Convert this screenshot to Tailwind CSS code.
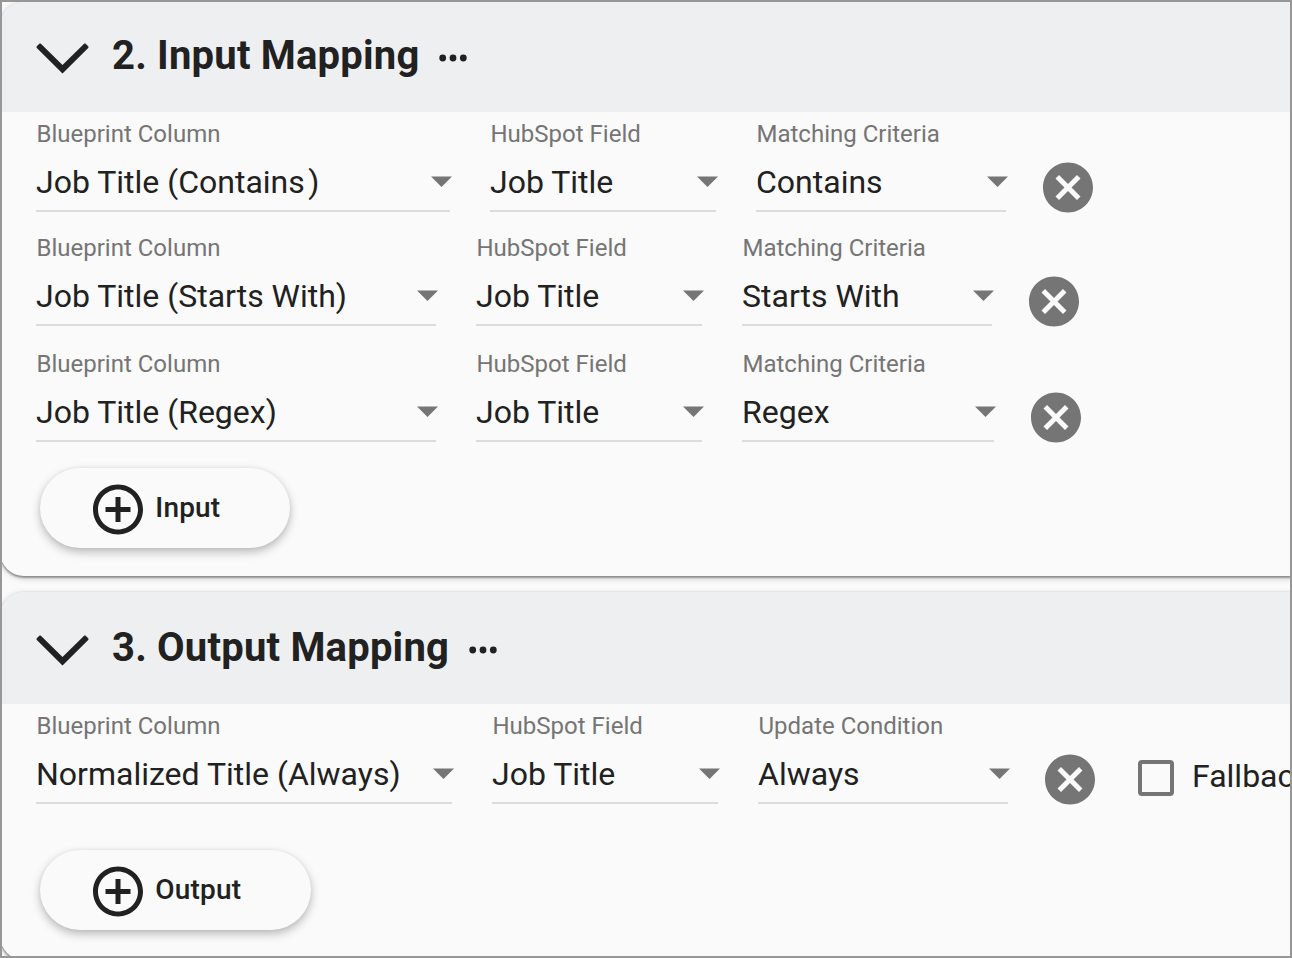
<!DOCTYPE html>
<html lang="en">
  <head>
    <meta charset="UTF-8" />
    <title>Blueprint Mapping</title>
    <script src="https://cdn.jsdelivr.net/npm/@tailwindcss/browser@4"></script>
  </head>
  <body class="w-[1292px] h-[958px] overflow-hidden border-2 border-[#979797] bg-[#fafafa] text-[#212121] font-[Roboto,sans-serif] text-[32px]">

    <!-- shared icons -->
    <svg class="hidden">
      <symbol id="chevron" viewBox="0 0 54 32">
        <path d="M4.9 1.8 26.5 23 48.1 1.8c.5-.5 1.1-.5 1.6 0l2.5 2.5c.5.5.5 1.1 0 1.6L26.5 31.5.8 5.9C.3 5.4.3 4.8.8 4.3l2.5-2.5c.5-.5 1.1-.5 1.6 0z" fill="currentColor" />
      </symbol>
      <symbol id="dots" viewBox="0 0 28 8">
        <circle cx="3.7" cy="4" r="3.4" /><circle cx="14" cy="4" r="3.4" /><circle cx="24.3" cy="4" r="3.4" />
      </symbol>
      <symbol id="caret" viewBox="0 0 21 12">
        <path d="M0 .5h21L10.5 11z" />
      </symbol>
      <symbol id="cancel" viewBox="1.6 1.4 20.8 20.8">
        <path d="M12 2C6.47 2 2 6.47 2 12s4.47 10 10 10 10-4.47 10-10S17.53 2 12 2zm5 13.59L15.59 17 12 13.41 8.41 17 7 15.59 10.59 12 7 8.41 8.41 7 12 10.59 15.59 7 17 8.41 13.41 12 17 15.59z" />
      </symbol>
      <symbol id="add" viewBox="1.6 1.4 20.8 20.8">
        <path d="M13 7h-2v4H7v2h4v4h2v-4h4v-2h-4V7zm-1-5C6.48 2 2 6.48 2 12s4.48 10 10 10 10-4.48 10-10S17.52 2 12 2zm0 18c-4.41 0-8-3.59-8-8s3.59-8 8-8 8 3.59 8 8-3.59 8-8 8z" />
      </symbol>
    </svg>

    <section class="w-[1294px] h-[574px] -ml-0.5 rounded-l-[24px] overflow-hidden bg-[#fafafa] shadow-[0_2px_2px_rgba(0,0,0,0.32),0_2px_6px_rgba(0,0,0,0.2),0_0_2px_rgba(0,0,0,0.12)]">
      <header class="flex items-center h-[110px] pl-9 pb-0.5 bg-[#eeeff1]">
        <svg class="w-[54px] h-8 mt-[3px] shrink-0"><use href="#chevron" /></svg>
        <h2 class="ml-[22px] text-[40px] leading-[48px] font-bold tracking-[0.2px]">2. Input Mapping</h2>
        <svg class="w-7 h-2 mt-[3px] ml-5 fill-current"><use href="#dots" /></svg>
      </header>

      <div class="flex items-end h-[100px] pl-9 whitespace-nowrap">
        <div class="w-[414px] border-b-2 border-[#dcdcdc] pb-[9px]">
          <label class="block pl-[0.5px] text-[24px] leading-7 text-[#757575]">Blueprint Column</label>
          <div class="flex items-center justify-between pt-[15px] leading-[38px]">
            <span>Job Title (Contains<span class="ml-[3.5px]">)</span></span>
            <svg class="w-[21px] h-3 -mr-0.5 fill-[#757575]"><use href="#caret" /></svg>
          </div>
        </div>
        <div class="w-[226px] ml-10 border-b-2 border-[#dcdcdc] pb-[9px]">
          <label class="block pl-[0.5px] text-[24px] leading-7 text-[#757575]">HubSpot Field</label>
          <div class="flex items-center justify-between pt-[15px] leading-[38px]">
            <span>Job Title</span>
            <svg class="w-[21px] h-3 -mr-0.5 fill-[#757575]"><use href="#caret" /></svg>
          </div>
        </div>
        <div class="w-[250px] ml-10 border-b-2 border-[#dcdcdc] pb-[9px]">
          <label class="block pl-[0.5px] text-[24px] leading-7 text-[#757575]">Matching Criteria</label>
          <div class="flex items-center justify-between pt-[15px] leading-[38px]">
            <span>Contains</span>
            <svg class="w-[21px] h-3 -mr-0.5 fill-[#757575]"><use href="#caret" /></svg>
          </div>
        </div>
        <svg class="size-13 shrink-0 ml-9 -mb-px fill-[#757575]"><use href="#cancel" /></svg>
      </div>

      <div class="flex items-end h-[114px] pl-9 whitespace-nowrap">
        <div class="w-[400px] border-b-2 border-[#dcdcdc] pb-[9px]">
          <label class="block pl-[0.5px] text-[24px] leading-7 text-[#757575]">Blueprint Column</label>
          <div class="flex items-center justify-between pt-[15px] leading-[38px]">
            <span>Job Title (Starts With)</span>
            <svg class="w-[21px] h-3 -mr-0.5 fill-[#757575]"><use href="#caret" /></svg>
          </div>
        </div>
        <div class="w-[226px] ml-10 border-b-2 border-[#dcdcdc] pb-[9px]">
          <label class="block pl-[0.5px] text-[24px] leading-7 text-[#757575]">HubSpot Field</label>
          <div class="flex items-center justify-between pt-[15px] leading-[38px]">
            <span>Job Title</span>
            <svg class="w-[21px] h-3 -mr-0.5 fill-[#757575]"><use href="#caret" /></svg>
          </div>
        </div>
        <div class="w-[250px] ml-10 border-b-2 border-[#dcdcdc] pb-[9px]">
          <label class="block pl-[0.5px] text-[24px] leading-7 text-[#757575]">Matching Criteria</label>
          <div class="flex items-center justify-between pt-[15px] leading-[38px]">
            <span>Starts With</span>
            <svg class="w-[21px] h-3 -mr-0.5 fill-[#757575]"><use href="#caret" /></svg>
          </div>
        </div>
        <svg class="size-13 shrink-0 ml-9 -mb-px fill-[#757575]"><use href="#cancel" /></svg>
      </div>

      <div class="flex items-end h-[116px] pl-9 whitespace-nowrap">
        <div class="w-[400px] border-b-2 border-[#dcdcdc] pb-[9px]">
          <label class="block pl-[0.5px] text-[24px] leading-7 text-[#757575]">Blueprint Column</label>
          <div class="flex items-center justify-between pt-[15px] leading-[38px]">
            <span>Job Title (Regex)</span>
            <svg class="w-[21px] h-3 -mr-0.5 fill-[#757575]"><use href="#caret" /></svg>
          </div>
        </div>
        <div class="w-[226px] ml-10 border-b-2 border-[#dcdcdc] pb-[9px]">
          <label class="block pl-[0.5px] text-[24px] leading-7 text-[#757575]">HubSpot Field</label>
          <div class="flex items-center justify-between pt-[15px] leading-[38px]">
            <span>Job Title</span>
            <svg class="w-[21px] h-3 -mr-0.5 fill-[#757575]"><use href="#caret" /></svg>
          </div>
        </div>
        <div class="w-[252px] ml-10 border-b-2 border-[#dcdcdc] pb-[9px]">
          <label class="block pl-[0.5px] text-[24px] leading-7 text-[#757575]">Matching Criteria</label>
          <div class="flex items-center justify-between pt-[15px] leading-[38px]">
            <span>Regex</span>
            <svg class="w-[21px] h-3 -mr-0.5 fill-[#757575]"><use href="#caret" /></svg>
          </div>
        </div>
        <svg class="size-13 shrink-0 ml-9 -mb-px fill-[#757575]"><use href="#cancel" /></svg>
      </div>

      <button class="flex items-center w-[250px] h-20 mt-[26px] ml-10 pl-[52px] rounded-full bg-[#fafafa] text-[28px] font-medium tracking-[0.2px] shadow-[0_4px_10px_rgba(0,0,0,0.26),0_0_4px_rgba(0,0,0,0.05)]">
        <svg class="size-13 mt-0.5 mr-[11.25px] fill-current"><use href="#add" /></svg>
        Input
      </button>
    </section>

    <section class="w-[1294px] h-[368px] mt-4 -ml-0.5 rounded-l-[24px] overflow-hidden bg-[#fafafa] shadow-[0_2px_2px_rgba(0,0,0,0.32),0_2px_6px_rgba(0,0,0,0.2),0_0_2px_rgba(0,0,0,0.12)]">
      <header class="flex items-center h-[112px] pl-9 bg-[#eeeff1]">
        <svg class="w-[54px] h-8 mt-[3px] shrink-0"><use href="#chevron" /></svg>
        <h2 class="ml-[22px] text-[40px] leading-[48px] font-bold tracking-[0.2px]">3. Output Mapping</h2>
        <svg class="w-7 h-2 mt-[3px] ml-5 fill-current"><use href="#dots" /></svg>
      </header>

      <div class="flex items-end h-[100px] pl-9 whitespace-nowrap">
        <div class="w-[416px] shrink-0 border-b-2 border-[#dcdcdc] pb-[9px]">
          <label class="block pl-[0.5px] text-[24px] leading-7 text-[#757575]">Blueprint Column</label>
          <div class="flex items-center justify-between pt-[15px] leading-[38px]">
            <span>Normalized Title (Always)</span>
            <svg class="w-[21px] h-3 -mr-0.5 fill-[#757575]"><use href="#caret" /></svg>
          </div>
        </div>
        <div class="w-[226px] shrink-0 ml-10 border-b-2 border-[#dcdcdc] pb-[9px]">
          <label class="block pl-[0.5px] text-[24px] leading-7 text-[#757575]">HubSpot Field</label>
          <div class="flex items-center justify-between pt-[15px] leading-[38px]">
            <span>Job Title</span>
            <svg class="w-[21px] h-3 -mr-0.5 fill-[#757575]"><use href="#caret" /></svg>
          </div>
        </div>
        <div class="w-[250px] shrink-0 ml-10 border-b-2 border-[#dcdcdc] pb-[9px]">
          <label class="block pl-[0.5px] text-[24px] leading-7 text-[#757575]">Update Condition</label>
          <div class="flex items-center justify-between pt-[15px] leading-[38px]">
            <span>Always</span>
            <svg class="w-[21px] h-3 -mr-0.5 fill-[#757575]"><use href="#caret" /></svg>
          </div>
        </div>
        <svg class="size-13 shrink-0 ml-9 -mb-px fill-[#757575]"><use href="#cancel" /></svg>
        <label class="flex shrink-0 items-center ml-[42px] pb-2 leading-9">
          <span class="w-9 h-9 mr-[18px] border-4 border-[#757575] rounded-[4px]"></span>
          <span class="-mt-1">Fallback</span>
        </label>
      </div>

      <button class="flex items-center w-[271px] h-20 mt-[46px] ml-10 pl-[52px] rounded-full bg-[#fafafa] text-[28px] font-medium tracking-[0.2px] shadow-[0_4px_10px_rgba(0,0,0,0.26),0_0_4px_rgba(0,0,0,0.05)]">
        <svg class="size-13 mt-0.5 mr-[11.25px] fill-current"><use href="#add" /></svg>
        Output
      </button>
    </section>

  </body>
</html>
